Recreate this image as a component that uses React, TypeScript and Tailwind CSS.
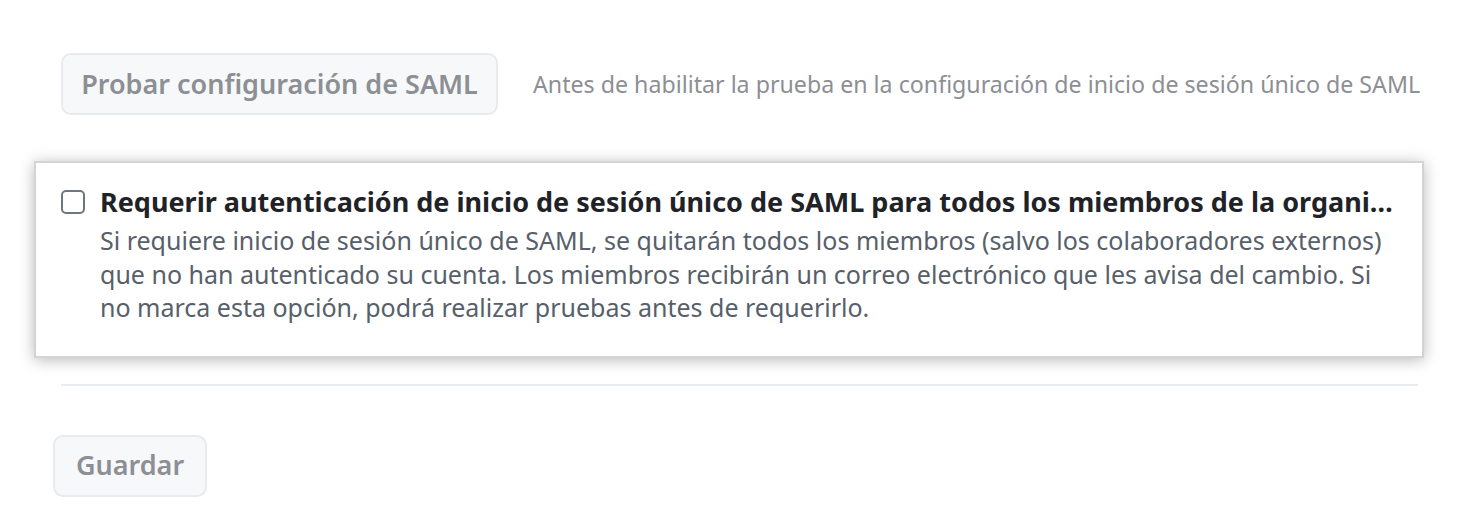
export default function App() {
  return (
    <div
      className="w-[1458px] h-[532px] bg-white overflow-hidden"
      style={{ fontFamily: '"Noto Sans", "Open Sans", sans-serif' }}
    >
      <div className="ml-[61px] w-[1357px] pt-[53px]">
        {/* Test button + hint */}
        <div className="flex items-center gap-[35px]">
          <button
            type="button"
            className="h-[62px] w-[437px] shrink-0 rounded-[10px] border-2 border-[#e8eaed] bg-[#f6f8fa] text-[27px] font-semibold text-[#8c8f94] whitespace-nowrap"
          >
            Probar configuración de SAML
          </button>
          <span className="text-[23.2px] text-[#8c8f94] whitespace-nowrap">
            Antes de habilitar la prueba en la configuración de inicio de sesión único de SAML
          </span>
        </div>

        {/* Highlighted require-SSO box */}
        <div className="mt-[46px] ml-[-27px] w-[1390px] border-2 border-[#d4d4d4] bg-white shadow-[0_2px_14px_rgba(0,0,0,0.28)] pl-[25px] pr-[20px] pt-[23px] pb-[31px]">
          <div className="flex items-start gap-[15px]">
            <span className="mt-[4px] w-[24px] h-[24px] shrink-0 rounded-[5px] border-2 border-[#6e7781] bg-white" />
            <div className="min-w-0 flex-1">
              <div className="pr-[6px] text-[27px] leading-[32px] font-bold text-[#1f2328] truncate">
                Requerir autenticación de inicio de sesión único de SAML para todos los miembros de la organización
              </div>
              <p className="mt-[6px] text-[25px] leading-[33.5px] text-[#57606a]">
                Si requiere inicio de sesión único de SAML, se quitarán todos los miembros (salvo los colaboradores externos) que no han autenticado su cuenta. Los miembros recibirán un correo electrónico que les avisa del cambio. Si no marca esta opción, podrá realizar pruebas antes de requerirlo.
              </p>
            </div>
          </div>
        </div>

        <div className="mt-[26px] h-[2px] bg-[#eaedf0]" />

        <div className="mt-[49px] ml-[-8px]">
          <button
            type="button"
            className="h-[62px] w-[154px] rounded-[10px] border-2 border-[#e8eaed] bg-[#f6f8fa] text-[27px] font-semibold text-[#8c8f94]"
          >
            Guardar
          </button>
        </div>
      </div>
    </div>
  );
}
